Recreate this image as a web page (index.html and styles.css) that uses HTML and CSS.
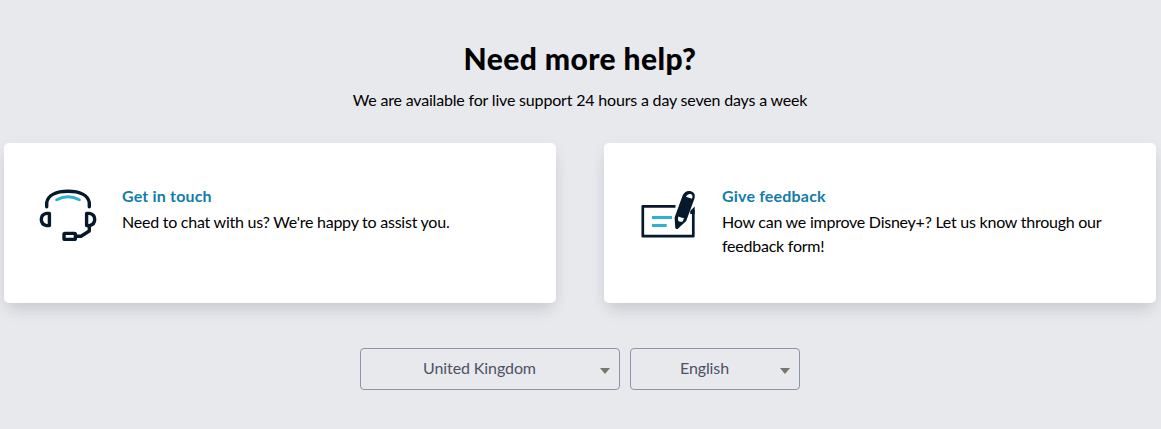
FILE: index.html
```html
<!DOCTYPE html>
<html lang="en">
<head>
  <meta charset="UTF-8">
  <meta name="viewport" content="width=device-width, initial-scale=1.0">
  <title>Need more help?</title>
  <link rel="stylesheet" href="styles.css">
</head>
<body>
  <section class="help">
    <h2>Need more help?</h2>
    <p class="intro">We are available for live support 24 hours a day seven days a week</p>
    <div class="cards">
      <a class="card" href="#">
        <svg class="icon" viewBox="0 0 64 64" fill="none" stroke="#06182c" stroke-width="3.4" stroke-linecap="round" stroke-linejoin="round">
          <path d="M10.7 22.7V18.5C12 11.3 20 7.2 32 7.2S52 11.3 53.3 18.5V22.7"/>
          <path stroke="#2fb1d3" stroke-width="3" d="M20.7 15.8C28 11.9 36 11.9 43.3 15.8"/>
          <path d="M13.4 29.4H10.5C7.3 30 5.3 31.8 5.3 35.3S7.3 41 10.5 41.6H13.4Z"/>
          <path d="M50.6 29.4H53.5C56.7 30 58.7 31.8 58.7 35.3S56.7 41 53.5 41.6H50.6Z"/>
          <path d="M53.3 42V47L45 52.3H39.5"/>
          <rect x="28" y="49.4" width="11.4" height="6" rx="1"/>
        </svg>
        <div class="card-text">
          <h3>Get in touch</h3>
          <p>Need to chat with us? We're happy to assist you.</p>
        </div>
      </a>
      <a class="card" href="#">
        <svg class="icon" viewBox="0 0 64 64" fill="none">
          <path stroke="#06182c" stroke-width="2.7" stroke-linejoin="round" d="M39.5 22.3H6.8V52.2H57.3V26"/>
          <path fill="#06182c" d="M54.2 27L58.7 22.5V30H54.2Z"/>
          <path stroke="#2fb1d3" stroke-width="2.8" d="M16 33.5H36M16 41.5H30.7"/>
          <path fill="#06182c" d="M46.6 11.5C48.1 7.8 51.8 6 55.5 7.4C58.8 8.7 59.6 11.7 58.2 15.2L50.2 37L41.6 45C40.2 45.4 39.2 44.5 39.2 43L38.6 33.5Z"/>
          <path fill="#fff" d="M50 12.8C51.2 9.7 55 9 56.2 11.2C56.7 12.2 56.4 13.6 56 14.7ZM42.2 32.6C44.2 33.5 46 34 48 34.3L46.8 37.2C45.2 38.4 43 37.8 42 36.3Z"/>
        </svg>
        <div class="card-text">
          <h3>Give feedback</h3>
          <p>How can we improve Disney+? Let us know through our feedback form!</p>
        </div>
      </a>
    </div>
    <div class="selectors">
      <button class="select country"><span>United Kingdom</span><i class="arrow"></i></button>
      <button class="select language"><span>English</span><i class="arrow"></i></button>
    </div>
  </section>
</body>
</html>
```
FILE: styles.css
```css
* { margin: 0; padding: 0; box-sizing: border-box; }
body {
  min-height: 429px;
  background: #e8e9ed;
  color: #000;
  font-family: Lato, "Open Sans", sans-serif;
  font-size: 16px;
  line-height: 24px;
  overflow: hidden;
}
.help { width: 1160px; padding: 40px 4px 0; }
h2 { text-align: center; font-size: 30px; line-height: 36px; font-weight: 900; letter-spacing: 0.4px; }
.intro { margin-top: 12px; text-align: center; letter-spacing: -0.18px; }
.cards { display: flex; gap: 48px; margin-top: 31px; }
.card {
  display: flex;
  flex: 1;
  height: 160px;
  padding: 40px 32px;
  background: #fff;
  border-radius: 5px;
  box-shadow: 0 10px 16px -4px rgba(40, 44, 60, 0.15), 0 2px 16px rgba(40, 44, 60, 0.04);
  color: #000;
  text-decoration: none;
}
.icon { flex: none; width: 64px; height: 64px; margin: 1px 22px 0 0; }
.card-text { flex: 1; }
h3 { margin-top: 1px; color: #127ca8; font-size: 16px; line-height: 24px; font-weight: 700; letter-spacing: 0.18px; }
.card-text p { margin-top: 2px; letter-spacing: -0.24px; }
.selectors { display: flex; justify-content: center; gap: 10px; margin-top: 45px; }
.select {
  display: flex;
  align-items: center;
  height: 42px;
  padding-right: 9px;
  background: none;
  border: 1px solid #8c95aa;
  border-radius: 4px;
  color: #4d5266;
  font: inherit;
  letter-spacing: -0.1px;
}
.select span { flex: 1; margin-top: -2px; padding-right: 2px; text-align: center; }
.country { width: 260px; }
.language { width: 170px; }
.arrow { margin-top: 3px; border: 5px solid transparent; border-top: 6px solid #78756b; border-bottom: 0; }
```
